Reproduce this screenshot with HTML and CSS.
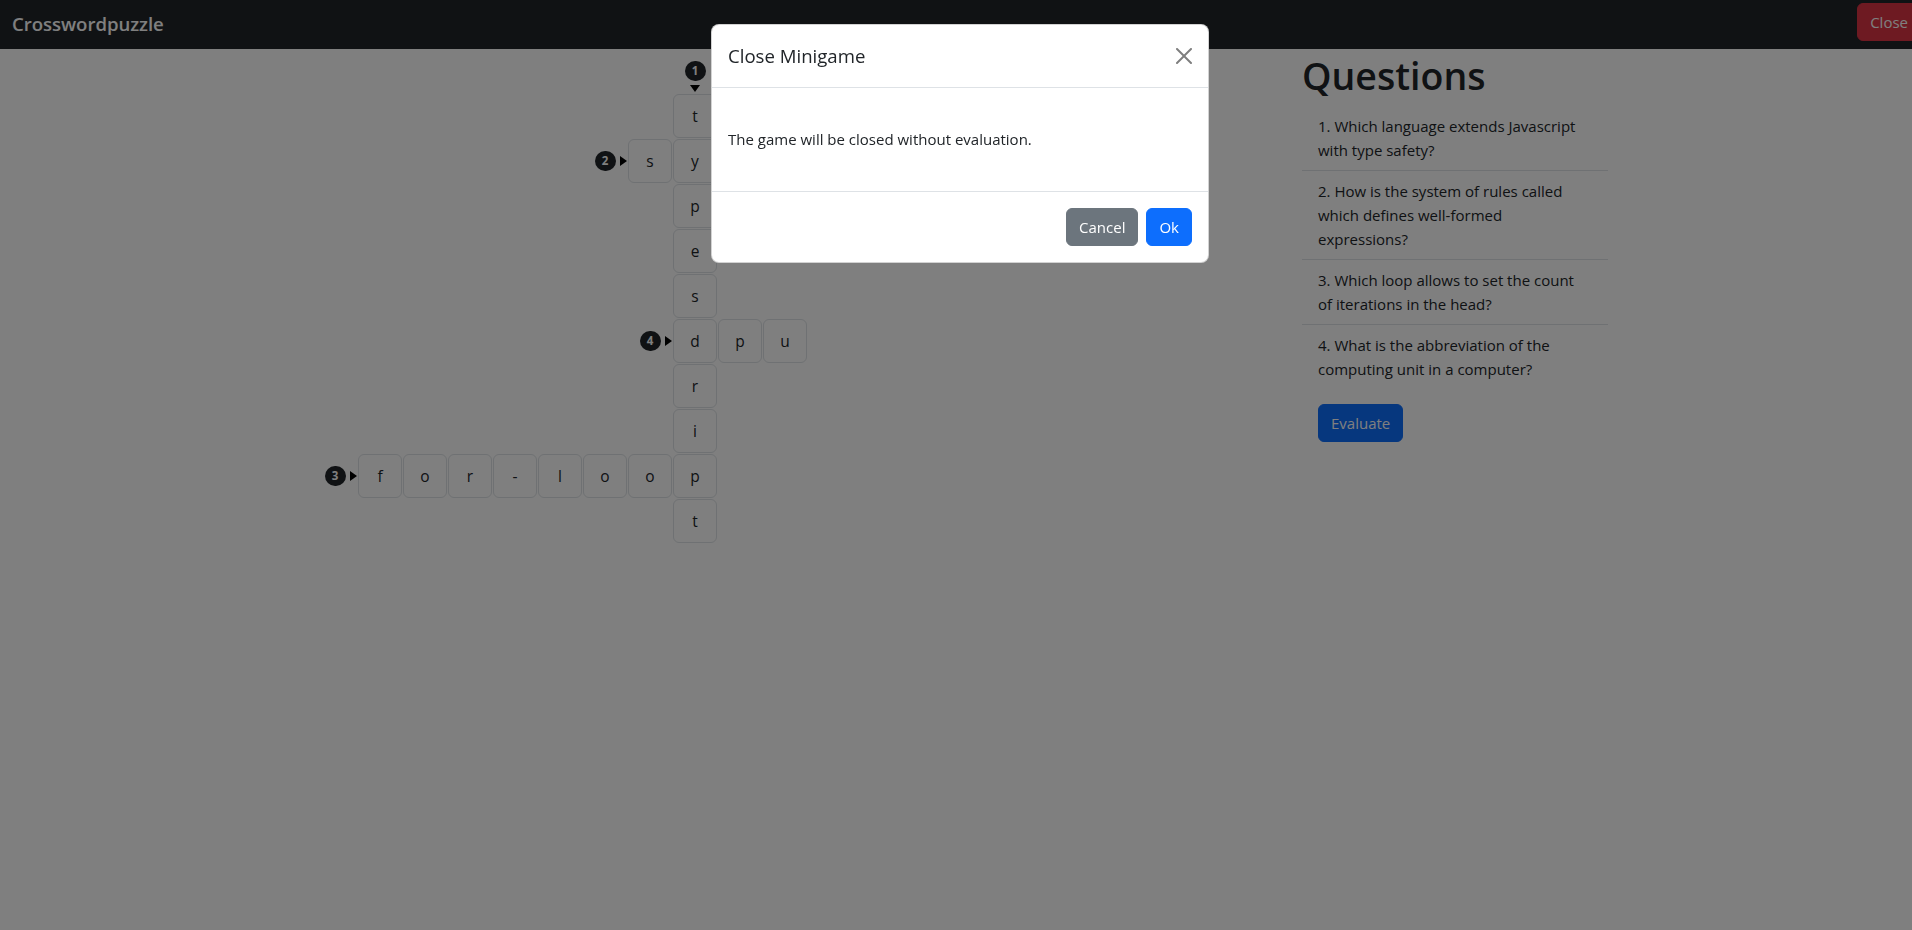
FILE: index.html
```html
<!DOCTYPE html>
<html lang="en">
<head>
<meta charset="utf-8">
<title>Crosswordpuzzle</title>
<link rel="stylesheet" href="styles.css">
</head>
<body>
<nav class="navbar">
  <span class="brand">Crosswordpuzzle</span>
  <button class="btn btn-danger nav-close">Close</button>
</nav>
<main class="layout">
  <section class="board">
    <div class="grid">
      <div class="marker marker-down" style="grid-column:9;grid-row:1"><span class="badge">1</span><span class="tri-down"></span></div>
      <div class="marker marker-right" style="grid-column:7;grid-row:3"><span class="badge">2</span><span class="tri-right"></span></div>
      <div class="marker marker-right" style="grid-column:1;grid-row:10"><span class="badge">3</span><span class="tri-right"></span></div>
      <div class="marker marker-right" style="grid-column:8;grid-row:7"><span class="badge">4</span><span class="tri-right"></span></div>

      <div class="cell" style="grid-column:9;grid-row:2">t</div>
      <div class="cell" style="grid-column:9;grid-row:3">y</div>
      <div class="cell" style="grid-column:9;grid-row:4">p</div>
      <div class="cell" style="grid-column:9;grid-row:5">e</div>
      <div class="cell" style="grid-column:9;grid-row:6">s</div>
      <div class="cell" style="grid-column:9;grid-row:7">d</div>
      <div class="cell" style="grid-column:9;grid-row:8">r</div>
      <div class="cell" style="grid-column:9;grid-row:9">i</div>
      <div class="cell" style="grid-column:9;grid-row:10">p</div>
      <div class="cell" style="grid-column:9;grid-row:11">t</div>

      <div class="cell" style="grid-column:8;grid-row:3">s</div>
      <div class="cell" style="grid-column:10;grid-row:3"></div>
      <div class="cell" style="grid-column:11;grid-row:3"></div>
      <div class="cell" style="grid-column:12;grid-row:3"></div>
      <div class="cell" style="grid-column:13;grid-row:3"></div>

      <div class="cell" style="grid-column:2;grid-row:10">f</div>
      <div class="cell" style="grid-column:3;grid-row:10">o</div>
      <div class="cell" style="grid-column:4;grid-row:10">r</div>
      <div class="cell" style="grid-column:5;grid-row:10">-</div>
      <div class="cell" style="grid-column:6;grid-row:10">l</div>
      <div class="cell" style="grid-column:7;grid-row:10">o</div>
      <div class="cell" style="grid-column:8;grid-row:10">o</div>

      <div class="cell" style="grid-column:10;grid-row:7">p</div>
      <div class="cell" style="grid-column:11;grid-row:7">u</div>
    </div>
  </section>
  <aside class="questions">
    <h1 class="questions-title">Questions</h1>
    <ul class="list">
      <li class="list-item">1. Which language extends Javascript with type safety?</li>
      <li class="list-item">2. How is the system of rules called which defines well-formed expressions?</li>
      <li class="list-item">3. Which loop allows to set the count of iterations in the head?</li>
      <li class="list-item">4. What is the abbreviation of the computing unit in a computer?</li>
    </ul>
    <button class="btn btn-primary evaluate">Evaluate</button>
  </aside>
</main>

<div class="backdrop"></div>
<div class="modal">
  <div class="modal-content">
    <div class="modal-header">
      <h5 class="modal-title">Close Minigame</h5>
      <button class="btn-close" aria-label="Close">
        <svg viewBox="0 0 16 16" width="16" height="16"><path d="M.293.293a1 1 0 0 1 1.414 0L8 6.586 14.293.293a1 1 0 1 1 1.414 1.414L9.414 8l6.293 6.293a1 1 0 0 1-1.414 1.414L8 9.414l-6.293 6.293a1 1 0 0 1-1.414-1.414L6.586 8 .293 1.707a1 1 0 0 1 0-1.414z"/></svg>
      </button>
    </div>
    <div class="modal-body">The game will be closed without evaluation.</div>
    <div class="modal-footer">
      <button class="btn btn-secondary">Cancel</button>
      <button class="btn btn-primary">Ok</button>
    </div>
  </div>
</div>
</body>
</html>
```

FILE: styles.css
```css
* { box-sizing: border-box; }

html, body {
  margin: 0;
  padding: 0;
  height: 100%;
}

body {
  font-family: "Open Sans", "Noto Sans", sans-serif;
  font-size: 15px;
  line-height: 24px;
  color: #212529;
  background: #fff;
  overflow: hidden;
}

.btn {
  font-family: inherit;
  font-size: 15px;
  line-height: 24px;
  padding: 6px 12px;
  border: 1px solid transparent;
  border-radius: 6px;
  color: #fff;
  cursor: pointer;
}
.btn-danger { background: #dc3545; border-color: #dc3545; }
.btn-primary { background: #0d6efd; border-color: #0d6efd; }
.btn-secondary { background: #6c757d; border-color: #6c757d; }

/* navbar */
.navbar {
  height: 49px;
  background: #212529;
  display: flex;
  align-items: flex-start;
  padding-left: 12px;
}
.brand {
  color: #fff;
  font-size: 18.6px;
  font-weight: 600;
  line-height: 47px;
  letter-spacing: -0.05px;
}
.nav-close {
  margin-left: auto;
  margin-top: 3px;
  margin-right: -9px;
  padding: 6px 12px;
  height: 38px;
}

/* main layout */
.layout {
  display: grid;
  grid-template-columns: 1302px 306px;
}

.board {
  padding: 0 0 0 313px;
}

.grid {
  display: grid;
  grid-template-columns: repeat(13, 44px);
  grid-template-rows: repeat(11, 44px);
  gap: 1px;
}

.cell {
  width: 44px;
  height: 44px;
  border: 1px solid #dee2e6;
  border-radius: 6px;
  background: #fff;
  display: flex;
  align-items: center;
  justify-content: center;
  font-size: 15.5px;
  color: #212529;
}

.marker {
  position: relative;
  display: flex;
  align-items: center;
  justify-content: center;
}
.badge {
  display: inline-block;
  min-width: 21px;
  height: 20px;
  padding: 0 6px;
  border-radius: 10px;
  background: #212529;
  color: #fff;
  font-size: 11.5px;
  font-weight: 700;
  line-height: 20px;
  text-align: center;
}
.tri-right {
  position: absolute;
  right: 0;
  top: 50%;
  margin-top: -5px;
  width: 0;
  height: 0;
  border-top: 5px solid transparent;
  border-bottom: 5px solid transparent;
  border-left: 7px solid #000;
}
.tri-down {
  position: absolute;
  bottom: 1px;
  left: 50%;
  margin-left: -5px;
  width: 0;
  height: 0;
  border-left: 5.5px solid transparent;
  border-right: 5.5px solid transparent;
  border-top: 7px solid #000;
}

/* questions */
.questions {
  padding-top: 3px;
}
.questions-title {
  margin: 0 0 6px;
  font-size: 37.5px;
  line-height: 48px;
  font-weight: 600;
}
.list {
  list-style: none;
  margin: 0;
  padding: 0;
}
.list-item {
  padding: 8px 26px 8px 16px;
  border-bottom: 1px solid #dee2e6;
  line-height: 24px;
}
.list-item:last-child { border-bottom: 0; }
.evaluate {
  margin: 15px 0 0 16px;
  height: 38px;
}

/* modal */
.backdrop {
  position: fixed;
  inset: 0;
  background: rgba(0, 0, 0, 0.5);
  z-index: 10;
}
.modal {
  position: fixed;
  top: 24px;
  left: 711px;
  width: 498px;
  z-index: 20;
}
.modal-content {
  background: #fff;
  border: 1px solid rgba(0, 0, 0, 0.175);
  border-radius: 8px;
  overflow: hidden;
}
.modal-header {
  display: flex;
  align-items: center;
  justify-content: space-between;
  padding: 16px 16px 16px;
  border-bottom: 1px solid #dee2e6;
}
.modal-title {
  margin: 0;
  font-size: 18.6px;
  line-height: 30px;
  font-weight: 500;
}
.btn-close {
  width: 16px;
  height: 16px;
  padding: 0;
  border: 0;
  background: transparent;
  opacity: 0.5;
  display: flex;
  cursor: pointer;
}
.btn-close svg { fill: #000; }
.modal-body {
  padding: 39px 16px 40px;
}
.modal-footer {
  display: flex;
  justify-content: flex-end;
  gap: 8px;
  padding: 16px;
  border-top: 1px solid #dee2e6;
}
.modal-footer .btn { height: 38px; }
```
